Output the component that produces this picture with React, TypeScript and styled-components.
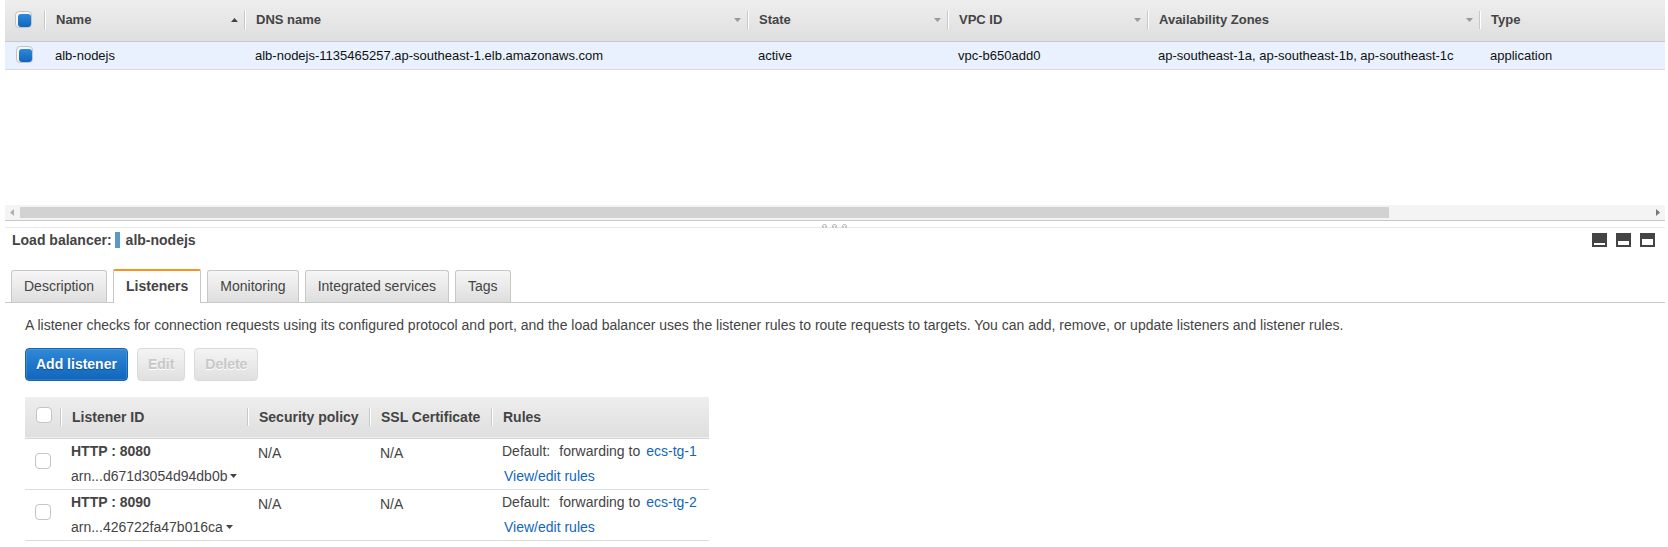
import React from 'react';
import styled, { createGlobalStyle, css } from 'styled-components';

const GlobalStyle = createGlobalStyle`
  *, *::before, *::after { box-sizing: border-box; }
  body {
    margin: 0;
    background: #fff;
    color: #444;
    font: 14px/20px "Liberation Sans", Arial, sans-serif;
  }
`;

const Page = styled.main`
  margin: 0 3px 0 5px;
`;

/* ---------- shared pieces ---------- */

const Checkbox = styled.input.attrs({ type: 'checkbox' })`
  appearance: none;
  display: block;
  width: 16px;
  height: 16px;
  margin: 0;
  border: 1px solid #c4c4c4;
  border-radius: 4px;
  background: #fff;

  &:checked {
    width: 17px;
    height: 17px;
    background: #f6f6f6;
  }

  &:checked::before {
    content: '';
    display: block;
    width: 13px;
    height: 13px;
    margin: 2px 0 0 2px;
    border-radius: 3px;
    background: linear-gradient(#2f88d8, #1166bb);
  }
`;

const Caret = styled.svg<{ $tone: string }>`
  flex: none;
  width: 7px;
  height: 4px;
  fill: ${(p) => p.$tone};
`;

const DownCaret = ({ tone }: { tone: string }) => (
  <Caret $tone={tone} viewBox="0 0 7 4" aria-hidden="true">
    <path d="M0 0h7L3.5 4z" />
  </Caret>
);

const UpCaret = ({ tone }: { tone: string }) => (
  <Caret $tone={tone} viewBox="0 0 7 4" aria-hidden="true">
    <path d="M0 4h7L3.5 0z" />
  </Caret>
);

/* ---------- load balancer grid ---------- */

const GridPane = styled.section`
  min-height: 205px;
`;

const Grid = styled.table`
  width: 100%;
  table-layout: fixed;
  border-collapse: separate;
  border-spacing: 0;
  font-size: 13px;
`;

const GridCol = styled.col<{ $width?: number }>`
  width: ${(p) => (p.$width ? `${p.$width}px` : 'auto')};
`;

const TableHead = styled.thead`
  background: linear-gradient(#eee, #dedede);
`;

const HeadCell = styled.th<{ $ridge?: boolean }>`
  height: 42px;
  padding: 11px 0 0;
  border-bottom: 1px solid ${(p) => (p.$ridge ? '#d6d6d6' : '#c8c8c8')};
  box-shadow: ${(p) => (p.$ridge ? 'inset 0 -1px #eee' : 'none')};
  text-align: left;
  vertical-align: top;
`;

const HeadInner = styled.div`
  display: flex;
  align-items: center;
  height: 18px;
`;

const Divider = styled.span`
  flex: none;
  width: 2px;
  height: 18px;
  border-left: 1px solid #c8c8c8;
  background: #fff;
`;

const HeadLabel = styled.span`
  flex: 1;
  padding: 0 10px;
  white-space: nowrap;
`;

const SortSlot = styled.span`
  display: flex;
  padding-right: 6px;
`;

const HeadCheckCell = styled(HeadCell)<{ $ridge?: boolean }>`
  padding: ${(p) => (p.$ridge ? '10px 0 0 11px' : '11px 0 0 10px')};
`;

const GridRow = styled.tr`
  background: #e8f1fd;
  color: #111;
`;

const GridCell = styled.td`
  height: 28px;
  padding: 0 11px;
  border-bottom: 1px solid #d5dce4;
  white-space: nowrap;
`;

const GridCheckCell = styled(GridCell)`
  padding-bottom: 2px;
`;

const ScrollBar = styled.div`
  display: flex;
  align-items: center;
  height: 16px;
  border-bottom: 1px solid #c8c8c8;
  background: #f4f4f4;
`;

const ScrollArrow = styled.button`
  flex: none;
  display: flex;
  align-items: center;
  justify-content: center;
  width: 14px;
  height: 15px;
  padding: 0;
  border: 0;
  background: none;
`;

const ScrollTrack = styled.div`
  flex: 1;
  padding: 0 1px;
`;

const ScrollThumb = styled.div`
  width: 84%;
  height: 11px;
  background: #d2d2d2;
`;

const Splitter = styled.div`
  display: flex;
  align-items: flex-end;
  justify-content: center;
  height: 7px;
  border-bottom: 1px solid #e8e8e8;
`;

const Grip = styled.svg`
  width: 26px;
  height: 4px;
  margin-bottom: -1px;
`;

/* ---------- details header ---------- */

const DetailsBar = styled.header`
  display: flex;
  align-items: center;
  justify-content: space-between;
  height: 24px;
  padding: 0 10px 0 7px;
`;

const DetailsTitle = styled.h1`
  display: flex;
  align-items: center;
  margin: 0;
  font-size: 14px;
  line-height: 16px;
`;

const ColorTag = styled.span`
  width: 5px;
  height: 16px;
  margin: 0 6px 0 3px;
  background: #5799cf;
`;

const PaneButtons = styled.div`
  display: flex;
  gap: 9px;
`;

const PaneButton = styled.button`
  display: block;
  width: 15px;
  height: 14px;
  padding: 0;
  border: 0;
  background: none;

  svg { display: block; }
`;

/* ---------- tabs ---------- */

const Tabs = styled.nav`
  display: flex;
  align-items: flex-end;
  gap: 6px;
  margin-top: 17px;
  padding-left: 6px;
  border-bottom: 1px solid #c8c8c8;
`;

const Tab = styled.button<{ $active?: boolean }>`
  height: 32px;
  padding: 0 12px 1px;
  border: 1px solid #c8c8c8;
  border-bottom: 0;
  border-radius: 3px 3px 0 0;
  background: linear-gradient(#f6f6f6, #dedede);
  color: #444;
  font: 14px/20px "Liberation Sans", Arial, sans-serif;

  ${(p) =>
    p.$active &&
    css`
      height: 34px;
      margin-bottom: -1px;
      padding-bottom: 2px;
      border-top: 2px solid #f7931e;
      border-radius: 2px 2px 0 0;
      background: #fff;
      font-weight: bold;
    `}
`;

/* ---------- listeners ---------- */

const Panel = styled.section`
  padding: 12px 20px 6px;
`;

const Intro = styled.p`
  margin: 0;
`;

const Actions = styled.div`
  display: flex;
  gap: 9px;
  margin: 13px 0 16px;
`;

const ActionButton = styled.button<{ $primary?: boolean }>`
  height: 33px;
  padding: 0 10px 1px;
  border: 1px solid #dadada;
  border-radius: 4px;
  background: linear-gradient(#f4f4f4, #e0e0e0);
  color: #c8c8c8;
  font: bold 14px/20px "Liberation Sans", Arial, sans-serif;
  text-shadow: 0 1px 0 #fff;

  ${(p) =>
    p.$primary &&
    css`
      border-color: #1763ad;
      background: linear-gradient(#2f88d8, #1166bb);
      box-shadow: inset 0 0 0 1px #ffffff22;
      color: #fff;
      text-shadow: 0 1px 1px #0b4a8a;
    `}
`;

const ListenerTable = styled.table`
  width: 684px;
  max-width: 100%;
  table-layout: fixed;
  border-collapse: separate;
  border-spacing: 0;
`;

const ListenerCell = styled.td<{ $plain?: boolean }>`
  height: 51px;
  padding: ${(p) => (p.$plain ? '4px 11px 0' : '2px 11px 0')};
  border-bottom: 1px solid #dcdcdc;
  vertical-align: top;
  white-space: nowrap;
`;

const CheckCell = styled.td`
  padding: 4px 0 10px 10px;
  border-bottom: 1px solid #dcdcdc;
  vertical-align: middle;
`;

const Line = styled.div<{ $indent?: boolean }>`
  display: flex;
  align-items: center;
  height: 20px;
  padding-left: ${(p) => (p.$indent ? '2px' : '0')};

  & + & { margin-top: 5px; }
`;

const RuleName = styled.span`
  margin-right: 9px;
`;

const RuleAction = styled.span`
  margin-right: 6px;
`;

const Link = styled.a`
  color: #1166bb;
  text-decoration: none;
`;

const ArnButton = styled.button`
  display: flex;
  align-items: center;
  gap: 3px;
  padding: 0;
  border: 0;
  background: none;
  color: inherit;
  font: inherit;
`;

const gridColumns = [
  { label: 'Name', width: 200, value: 'alb-nodejs', sorted: true },
  { label: 'DNS name', width: 503, value: 'alb-nodejs-1135465257.ap-southeast-1.elb.amazonaws.com' },
  { label: 'State', width: 200, value: 'active' },
  { label: 'VPC ID', width: 200, value: 'vpc-b650add0' },
  { label: 'Availability Zones', width: 332, value: 'ap-southeast-1a, ap-southeast-1b, ap-southeast-1c' },
  { label: 'Type', value: 'application', last: true },
];

const tabs = ['Description', 'Listeners', 'Monitoring', 'Integrated services', 'Tags'];

const listenerColumns = [
  { label: 'Listener ID', width: 187 },
  { label: 'Security policy', width: 122 },
  { label: 'SSL Certificate', width: 122 },
  { label: 'Rules' },
];

const listeners = [
  { protocol: 'HTTP : 8080', arn: 'arn...d671d3054d94db0b', target: 'ecs-tg-1' },
  { protocol: 'HTTP : 8090', arn: 'arn...426722fa47b016ca', target: 'ecs-tg-2' },
];

const paneLayouts = [
  { label: 'Minimize details', top: 10, height: 2 },
  { label: 'Split view', top: 8, height: 4 },
  { label: 'Maximize details', top: 6, height: 6 },
];

export default function App() {
  return (
    <Page>
      <GlobalStyle />
      <GridPane>
        <Grid>
          <colgroup>
            <GridCol $width={39} />
            {gridColumns.map((c) => (
              <GridCol key={c.label} $width={c.width} />
            ))}
          </colgroup>
          <TableHead>
            <tr>
              <HeadCheckCell>
                <Checkbox defaultChecked aria-label="Select all load balancers" />
              </HeadCheckCell>
              {gridColumns.map((c) => (
                <HeadCell key={c.label} scope="col">
                  <HeadInner>
                    <Divider />
                    <HeadLabel>{c.label}</HeadLabel>
                    {!c.last && (
                      <SortSlot>{c.sorted ? <UpCaret tone="#444" /> : <DownCaret tone="#999" />}</SortSlot>
                    )}
                  </HeadInner>
                </HeadCell>
              ))}
            </tr>
          </TableHead>
          <tbody>
            <GridRow>
              <GridCheckCell>
                <Checkbox defaultChecked aria-label="Select alb-nodejs" />
              </GridCheckCell>
              {gridColumns.map((c) => (
                <GridCell key={c.label}>{c.value}</GridCell>
              ))}
            </GridRow>
          </tbody>
        </Grid>
      </GridPane>

      <ScrollBar>
        <ScrollArrow aria-label="Scroll left">
          <svg width="4" height="7" viewBox="0 0 4 7" fill="#b0b0b0">
            <path d="M4 0v7L0 3.5z" />
          </svg>
        </ScrollArrow>
        <ScrollTrack>
          <ScrollThumb />
        </ScrollTrack>
        <ScrollArrow aria-label="Scroll right">
          <svg width="4" height="7" viewBox="0 0 4 7" fill="#777">
            <path d="M0 0v7L4 3.5z" />
          </svg>
        </ScrollArrow>
      </ScrollBar>
      <Splitter>
        <Grip viewBox="0 0 26 4" aria-hidden="true">
          {[0, 10, 20].map((x) => (
            <g key={x}>
              <path d={`M${x} 4v-3h1v-1h3v1h1v3z`} fill="#c4c4c4" />
              <path d={`M${x + 1} 1h3v1h-1v2h-1v-2h-1z`} fill="#f4f4f4" />
            </g>
          ))}
        </Grip>
      </Splitter>

      <DetailsBar>
        <DetailsTitle>
          Load balancer:
          <ColorTag />
          alb-nodejs
        </DetailsTitle>
        <PaneButtons>
          {paneLayouts.map((p) => (
            <PaneButton key={p.label} aria-label={p.label}>
              <svg width="15" height="14" viewBox="0 0 15 14" shapeRendering="crispEdges">
                <rect width="15" height="14" fill="#444" />
                <rect x="2" y={p.top} width="11" height={p.height} fill="#fff" />
              </svg>
            </PaneButton>
          ))}
        </PaneButtons>
      </DetailsBar>

      <Tabs aria-label="Load balancer details">
        {tabs.map((t) => (
          <Tab key={t} $active={t === 'Listeners'} aria-current={t === 'Listeners' ? 'page' : undefined}>
            {t}
          </Tab>
        ))}
      </Tabs>

      <Panel>
        <Intro>
          A listener checks for connection requests using its configured protocol and port, and the load balancer uses
          the listener rules to route requests to targets. You can add, remove, or update listeners and listener rules.
        </Intro>
        <Actions>
          <ActionButton $primary>Add listener</ActionButton>
          <ActionButton disabled>Edit</ActionButton>
          <ActionButton disabled>Delete</ActionButton>
        </Actions>
        <ListenerTable>
          <colgroup>
            <GridCol $width={35} />
            {listenerColumns.map((c) => (
              <GridCol key={c.label} $width={c.width} />
            ))}
          </colgroup>
          <TableHead>
            <tr>
              <HeadCheckCell $ridge>
                <Checkbox aria-label="Select all listeners" />
              </HeadCheckCell>
              {listenerColumns.map((c) => (
                <HeadCell key={c.label} scope="col" $ridge>
                  <HeadInner>
                    <Divider />
                    <HeadLabel>{c.label}</HeadLabel>
                  </HeadInner>
                </HeadCell>
              ))}
            </tr>
          </TableHead>
          <tbody>
            {listeners.map((l) => (
              <tr key={l.arn}>
                <CheckCell>
                  <Checkbox aria-label={`Select ${l.protocol}`} />
                </CheckCell>
                <ListenerCell>
                  <Line>
                    <strong>{l.protocol}</strong>
                  </Line>
                  <Line>
                    <ArnButton>
                      {l.arn}
                      <DownCaret tone="#444" />
                    </ArnButton>
                  </Line>
                </ListenerCell>
                <ListenerCell $plain>N/A</ListenerCell>
                <ListenerCell $plain>N/A</ListenerCell>
                <ListenerCell>
                  <Line>
                    <RuleName>Default:</RuleName>
                    <RuleAction>forwarding to</RuleAction>
                    <Link href="#target-group">{l.target}</Link>
                  </Line>
                  <Line $indent>
                    <Link href="#rules">View/edit rules</Link>
                  </Line>
                </ListenerCell>
              </tr>
            ))}
          </tbody>
        </ListenerTable>
      </Panel>
    </Page>
  );
}
